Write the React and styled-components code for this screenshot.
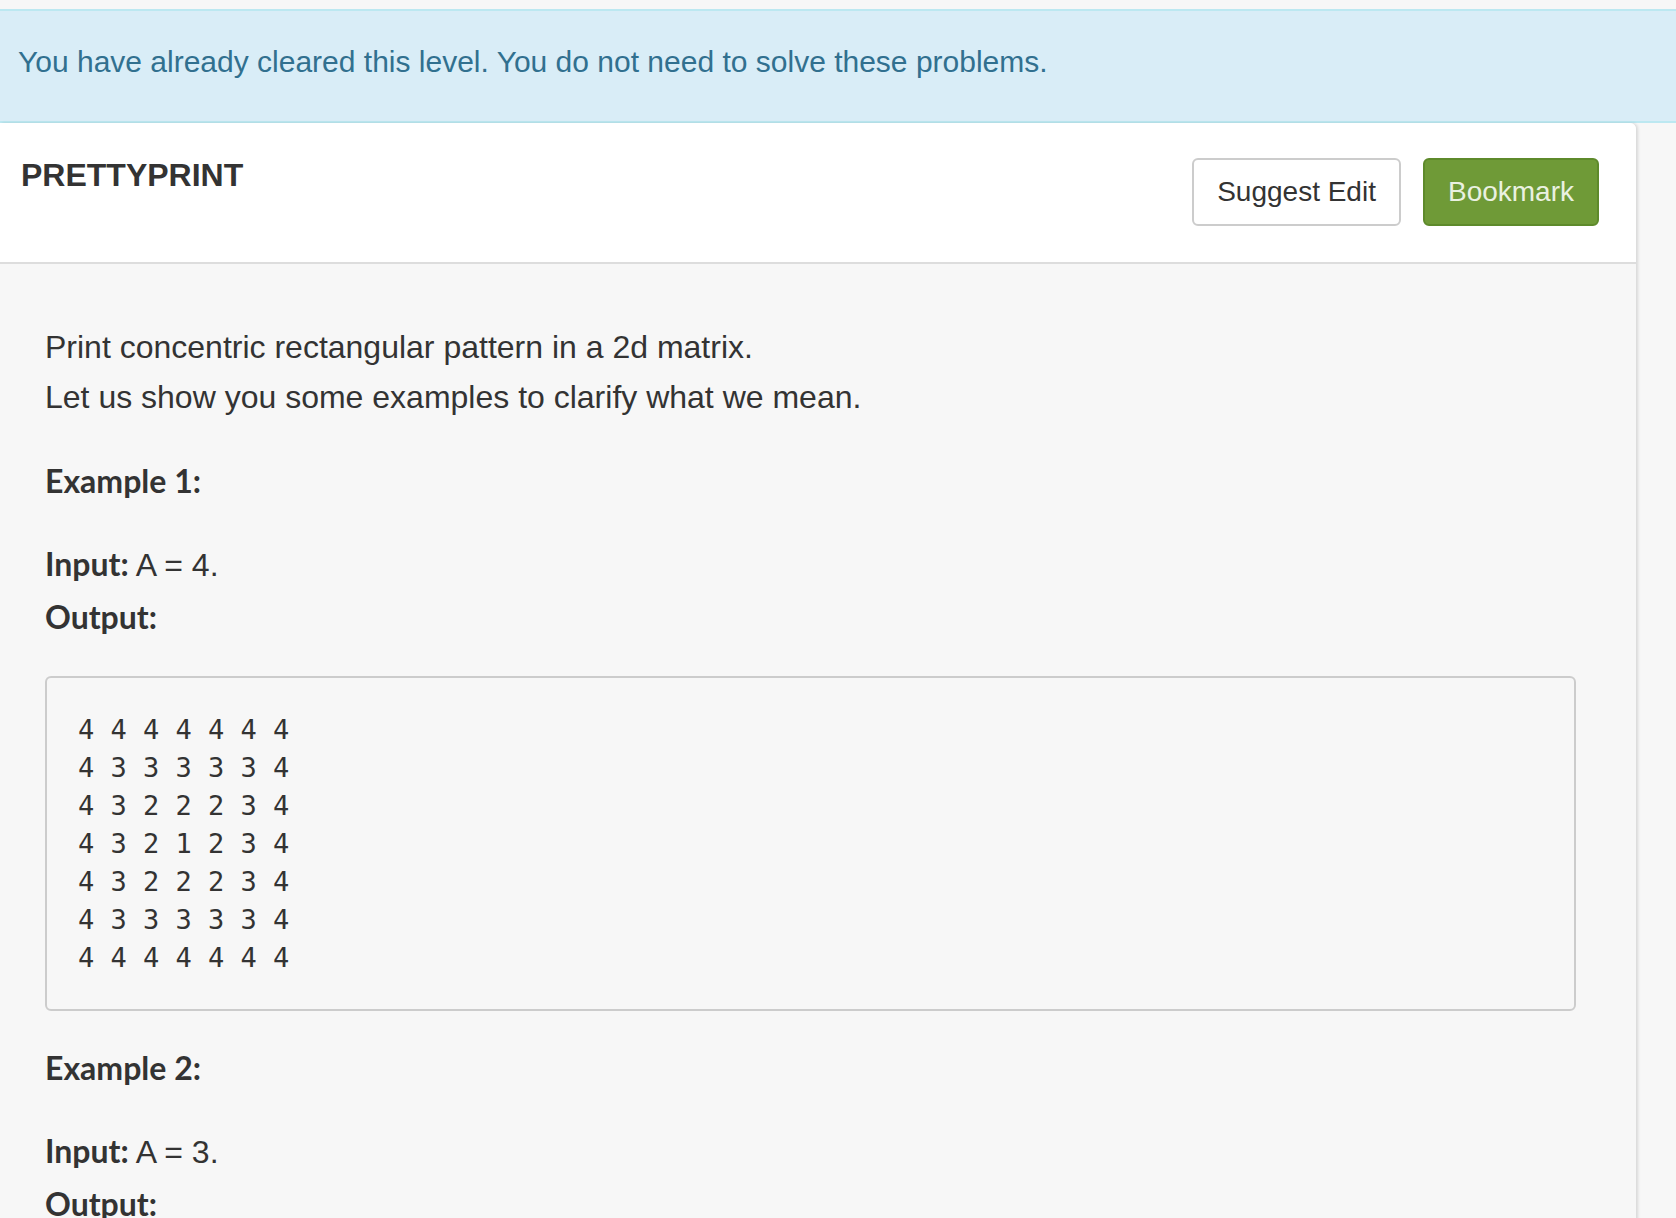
import React from "react";
import styled, { createGlobalStyle } from "styled-components";

const GlobalStyle = createGlobalStyle`
  html, body {
    margin: 0;
    padding: 0;
    background: #f7f7f7;
  }
  body {
    font-family: "Liberation Sans", Arial, sans-serif;
    color: #333;
  }
`;

const Page = styled.div`
  padding-top: 9px;
  min-height: 1218px;
  overflow: hidden;
`;

const Alert = styled.div`
  background: #d9edf7;
  border-top: 2px solid #bce8f1;
  border-bottom: 2px solid #bce8f1;
  color: #31708f;
  font-size: 30px;
  line-height: 40px;
  padding: 31px 18px 39px;
`;

const Panel = styled.div`
  width: 1636px;
  box-shadow: 2px 0 3px rgba(0, 0, 0, 0.12);
  border-top-right-radius: 6px;
`;

const Header = styled.div`
  display: flex;
  justify-content: space-between;
  align-items: flex-start;
  background: #fff;
  border-bottom: 2px solid #ddd;
  border-top-right-radius: 6px;
  padding: 35px 37px 36px 21px;
`;

const Title = styled.h1`
  margin: -3px 0 0;
  font-size: 32px;
  line-height: 40px;
  font-weight: 700;
  color: #333;
`;

const Actions = styled.div`
  display: flex;
  gap: 22px;
`;

const Button = styled.button`
  height: 68px;
  padding: 0 23px;
  border-radius: 6px;
  font-family: "Liberation Sans", Arial, sans-serif;
  font-size: 28px;
  border: 2px solid ${(p) => (p.$primary ? "#5e8a2b" : "#ccc")};
  background: ${(p) => (p.$primary ? "#6f9a37" : "#fff")};
  color: ${(p) => (p.$primary ? "#eaf1e1" : "#333")};
  cursor: pointer;
`;

const Body = styled.div`
  padding: 58px 60px 40px 45px;
`;

const Text = styled.p`
  margin: 0;
  font-size: 32px;
  line-height: 50px;
`;

const Label = styled.b`
  font-family: Lato, "Open Sans", sans-serif;
  font-weight: 700;
  font-size: 32px;
  line-height: 1;
`;

const Pre = styled.pre`
  margin: 31px 0 0;
  padding: 33px 31px 32px;
  border: 2px solid #ccc;
  border-radius: 6px;
  background: #f7f7f7;
  font-family: "DejaVu Sans Mono", monospace;
  font-size: 27px;
  line-height: 38px;
  color: #333;
`;

const ExampleTitle = styled.p`
  margin: 34px 0 0;
  font-family: Lato, "Open Sans", sans-serif;
  font-weight: 700;
  font-size: 32px;
  line-height: 50px;

  ${Pre} + & {
    margin-top: 32px;
  }
`;

const IO = styled.div`
  margin-top: 33px;
  font-size: 32px;
  line-height: 53px;
`;

function buildMatrix(a) {
  const n = 2 * a - 1;
  const rows = [];
  for (let i = 0; i < n; i++) {
    const row = [];
    for (let j = 0; j < n; j++) {
      const d = Math.min(i, j, n - 1 - i, n - 1 - j);
      row.push(a - d);
    }
    rows.push(row.join(" "));
  }
  return rows.join("\n");
}

function Example({ index, a }) {
  return (
    <>
      <ExampleTitle>Example {index}:</ExampleTitle>
      <IO>
        <div>
          <Label>Input:</Label> A = {a}.
        </div>
        <div>
          <Label>Output:</Label>
        </div>
      </IO>
      <Pre>{buildMatrix(a)}</Pre>
    </>
  );
}

export default function App() {
  return (
    <Page>
      <GlobalStyle />
      <Alert>
        You have already cleared this level. You do not need to solve these
        problems.
      </Alert>
      <Panel>
        <Header>
          <Title>PRETTYPRINT</Title>
          <Actions>
            <Button>Suggest Edit</Button>
            <Button $primary>Bookmark</Button>
          </Actions>
        </Header>
        <Body>
          <Text>Print concentric rectangular pattern in a 2d matrix.</Text>
          <Text>Let us show you some examples to clarify what we mean.</Text>
          <Example index={1} a={4} />
          <Example index={2} a={3} />
        </Body>
      </Panel>
    </Page>
  );
}
